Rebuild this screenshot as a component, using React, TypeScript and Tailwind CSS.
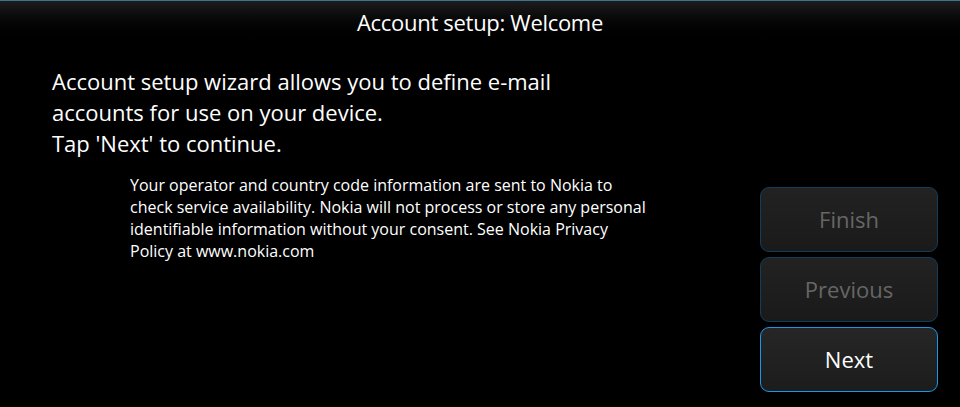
export default function App() {
  return (
    <div
      className="w-[960px] h-[407px] bg-black text-white flex flex-col overflow-hidden"
      style={{ fontFamily: '"Open Sans", "Noto Sans", sans-serif' }}
    >
      <div className="h-[44px] shrink-0 border-t border-[#3d7393] bg-gradient-to-b from-[#1d1d1d] to-black flex items-center justify-center">
        <span className="text-[22px] tracking-[-0.3px]">Account setup: Welcome</span>
      </div>
      <div className="flex-1 flex">
        <div className="flex-1 flex flex-col">
          <p className="pl-[52px] pt-[22px] text-[22px] leading-[31px]">
            Account setup wizard allows you to define e-mail
            <br />
            accounts for use on your device.
            <br />
            Tap 'Next' to continue.
          </p>
          <p className="pl-[130px] pt-[15px] text-[16px] leading-[22px]">
            Your operator and country code information are sent to Nokia to
            <br />
            check service availability. Nokia will not process or store any personal
            <br />
            identifiable information without your consent. See Nokia Privacy
            <br />
            Policy at www.nokia.com
          </p>
        </div>
        <div className="w-[178px] mr-[22px] flex flex-col justify-end gap-[5px] pb-[15px]">
          <button className="h-[65px] rounded-[9px] border border-[#123d5c] bg-gradient-to-b from-[#222] to-[#1a1a1a] text-[22px] text-[#666]">
            Finish
          </button>
          <button className="h-[65px] rounded-[9px] border border-[#123d5c] bg-gradient-to-b from-[#222] to-[#1a1a1a] text-[22px] text-[#666]">
            Previous
          </button>
          <button className="h-[65px] rounded-[9px] border border-[#1d96ea] bg-gradient-to-b from-[#262626] to-[#1c1c1c] text-[22px] text-white">
            Next
          </button>
        </div>
      </div>
    </div>
  );
}
